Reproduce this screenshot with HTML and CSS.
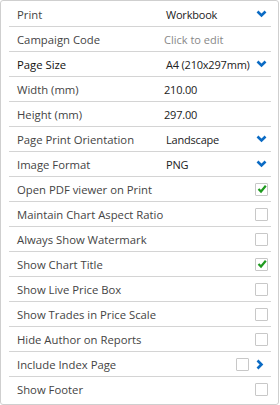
FILE: index.html
```html
<!DOCTYPE html>
<html lang="en">
<head>
    <meta charset="UTF-8">
    <meta name="viewport" content="width=device-width, initial-scale=1.0">
    <title>Print Settings</title>
    <link rel="stylesheet" href="styles.css">
</head>
<body>
    <div class="panel">
        <div class="row">
            <span class="label">Print</span>
            <span class="value select">Workbook</span>
            <svg class="chev" width="11" height="8" viewBox="0 0 11 8"><polyline points="1.5,1.5 5.5,5.5 9.5,1.5" fill="none" stroke="#0b6bc4" stroke-width="2.6"/></svg>
        </div>
        <div class="row">
            <span class="label">Campaign Code</span>
            <span class="value muted">Click to edit</span>
        </div>
        <div class="row">
            <span class="label strong">Page Size</span>
            <span class="value select">A4 (210x297mm)</span>
            <svg class="chev" width="11" height="8" viewBox="0 0 11 8"><polyline points="1.5,1.5 5.5,5.5 9.5,1.5" fill="none" stroke="#0b6bc4" stroke-width="2.6"/></svg>
        </div>
        <div class="row">
            <span class="label">Width (mm)</span>
            <span class="value">210.00</span>
        </div>
        <div class="row">
            <span class="label">Height (mm)</span>
            <span class="value">297.00</span>
        </div>
        <div class="row">
            <span class="label">Page Print Orientation</span>
            <span class="value select">Landscape</span>
            <svg class="chev" width="11" height="8" viewBox="0 0 11 8"><polyline points="1.5,1.5 5.5,5.5 9.5,1.5" fill="none" stroke="#0b6bc4" stroke-width="2.6"/></svg>
        </div>
        <div class="row">
            <span class="label">Image Format</span>
            <span class="value select">PNG</span>
            <svg class="chev" width="11" height="8" viewBox="0 0 11 8"><polyline points="1.5,1.5 5.5,5.5 9.5,1.5" fill="none" stroke="#0b6bc4" stroke-width="2.6"/></svg>
        </div>
        <div class="row">
            <span class="label">Open PDF viewer on Print</span>
            <span class="box checked"><svg width="10" height="10" viewBox="0 0 10 10"><polyline points="1.5,5 4,7.5 8.8,1.8" fill="none" stroke="#1f9a1f" stroke-width="2.2"/></svg></span>
        </div>
        <div class="row">
            <span class="label">Maintain Chart Aspect Ratio</span>
            <span class="box"></span>
        </div>
        <div class="row">
            <span class="label">Always Show Watermark</span>
            <span class="box"></span>
        </div>
        <div class="row">
            <span class="label">Show Chart Title</span>
            <span class="box checked"><svg width="10" height="10" viewBox="0 0 10 10"><polyline points="1.5,5 4,7.5 8.8,1.8" fill="none" stroke="#1f9a1f" stroke-width="2.2"/></svg></span>
        </div>
        <div class="row">
            <span class="label">Show Live Price Box</span>
            <span class="box"></span>
        </div>
        <div class="row">
            <span class="label">Show Trades in Price Scale</span>
            <span class="box"></span>
        </div>
        <div class="row">
            <span class="label">Hide Author on Reports</span>
            <span class="box"></span>
        </div>
        <div class="row">
            <span class="label">Include Index Page</span>
            <span class="box"></span>
            <svg class="next" width="8" height="11" viewBox="0 0 8 11"><polyline points="1.5,1.5 5.5,5.5 1.5,9.5" fill="none" stroke="#0b6bc4" stroke-width="2.6"/></svg>
        </div>
        <div class="row">
            <span class="label">Show Footer</span>
            <span class="box"></span>
        </div>
    </div>
</body>
</html>
```

FILE: styles.css
```css
body {
    margin: 0;
    font-family: "Open Sans", "Liberation Sans", sans-serif;
    font-size: 11.3px;
    color: #444;
    background: #fff;
}

.panel {
    width: 277px;
    height: 402px;
    border: 1px solid #cfcfcf;
    border-radius: 3px;
    padding: 1px 0 0 0;
    box-sizing: content-box;
}

.row {
    margin: 0 7px 0 8px;
    height: 24px;
    border-bottom: 1px solid #d4d4d4;
    display: flex;
    align-items: center;
    padding: 0 3px 0 8px;
    white-space: nowrap;
}

.row:last-child {
    border-bottom: none;
}

.label {
    width: 147px;
    flex: none;
}

.strong {
    color: #111;
}

.value {
    flex: 1;
    min-width: 0;
    color: #222;
    font-size: 11px;
    letter-spacing: -0.2px;
}

.value.select {
    padding-left: 2px;
}

.muted {
    color: #888;
    letter-spacing: 0;
}

.chev {
    flex: none;
    margin-right: 1px;
}

.box {
    margin-left: auto;
    width: 11px;
    height: 11px;
    border: 1px solid #c8c8c8;
    border-radius: 1px;
    display: flex;
    align-items: center;
    justify-content: center;
}

.next {
    flex: none;
    margin-left: 7px;
    margin-right: 4px;
}
```
